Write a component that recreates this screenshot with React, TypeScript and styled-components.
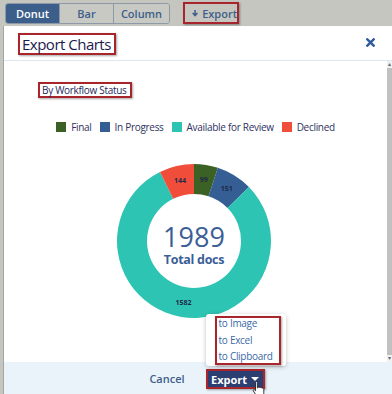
import React from 'react'
import styled, { createGlobalStyle } from 'styled-components'

interface Slice {
  label: string
  value: number
  color: string
}

const slices: Slice[] = [
  { label: 'Final', value: 99, color: '#3b6124' },
  { label: 'In Progress', value: 151, color: '#355e95' },
  { label: 'Available for Review', value: 1582, color: '#2ec4b3' },
  { label: 'Declined', value: 144, color: '#f04e3b' },
]

const GlobalStyle = createGlobalStyle`
  * { box-sizing: border-box; }
  body {
    margin: 0;
    background: #c6c6c0;
    font-family: "Open Sans", "Noto Sans", sans-serif;
  }
`

const CX = 80
const CY = 80
const R_OUT = 77
const R_IN = 47

const polar = (r: number, deg: number) => {
  const a = ((deg - 90) * Math.PI) / 180
  return [CX + r * Math.cos(a), CY + r * Math.sin(a)]
}

const arcPath = (start: number, end: number) => {
  const large = end - start > 180 ? 1 : 0
  const [x1, y1] = polar(R_OUT, start)
  const [x2, y2] = polar(R_OUT, end)
  const [x3, y3] = polar(R_IN, end)
  const [x4, y4] = polar(R_IN, start)
  return `M${x1} ${y1} A${R_OUT} ${R_OUT} 0 ${large} 1 ${x2} ${y2} L${x3} ${y3} A${R_IN} ${R_IN} 0 ${large} 0 ${x4} ${y4} Z`
}

const Donut: React.FC = () => {
  const total = slices.reduce((s, x) => s + x.value, 0)
  let angle = 0
  return (
    <ChartSvg width={160} height={160} viewBox="0 0 160 160">
      {slices.map(s => {
        const start = angle
        const end = angle + (s.value / total) * 360
        angle = end
        const [lx, ly] = polar(62, (start + end) / 2)
        return (
          <g key={s.label}>
            <path d={arcPath(start, end)} fill={s.color} />
            <SliceLabel x={lx} y={ly + 2.5} textAnchor="middle">
              {s.value}
            </SliceLabel>
          </g>
        )
      })}
      <BigNumber x={CX} y={CY + 6} textAnchor="middle">1989</BigNumber>
      <TotalText x={CX} y={CY + 23} textAnchor="middle">Total docs</TotalText>
    </ChartSvg>
  )
}

const legendOrder = ['Final', 'In Progress', 'Available for Review', 'Declined']

const App: React.FC = () => (
  <Page>
    <GlobalStyle />
    <TopBar>
      <Segmented>
        <SegButton $active $w={53}>Donut</SegButton>
        <SegButton $w={54}>Bar</SegButton>
        <SegButton $w={56}>Column</SegButton>
      </Segmented>
      <TopExport>
        <svg width="9" height="10" viewBox="0 0 9 10">
          <path d="M4.5 0.5v7M1 5l3.5 3.8L8 5" stroke="#3d5f8a" strokeWidth="2.2" fill="none" />
        </svg>
        Export
      </TopExport>
    </TopBar>
    <Modal>
      <Header>
        <Title>Export Charts</Title>
        <Close viewBox="0 0 10 10" width={9} height={9}>
          <path d="M1.5 1.5l7 7M8.5 1.5l-7 7" stroke="#2d5a9a" strokeWidth="2.6" strokeLinecap="square" />
        </Close>
      </Header>
      <Body>
        <Content>
          <Subtitle>By Workflow Status</Subtitle>
          <Legend>
            {legendOrder.map(name => {
              const s = slices.find(x => x.label === name)!
              return (
                <LegendItem key={name}>
                  <Swatch $color={s.color} />
                  {name}
                </LegendItem>
              )
            })}
          </Legend>
          <Donut />
        </Content>
        <Scrollbar>
          <Arrow>▴</Arrow>
          <Thumb />
          <Arrow>▾</Arrow>
        </Scrollbar>
      </Body>
      <Footer>
        <Cancel>Cancel</Cancel>
        <ExportWrap>
          <Menu>
            <MenuList>
              <MenuItem style={{ marginTop: -3 }}>to Image</MenuItem>
              <MenuItem>to Excel</MenuItem>
              <MenuItem>to Clipboard</MenuItem>
            </MenuList>
          </Menu>
          <ExportButton>
            Export
            <Caret />
          </ExportButton>
          <Hand width="14" height="17" viewBox="0 0 14 17">
            <path
              d="M4 1.2c.8 0 1.3.5 1.3 1.3v5.3l.6-.1c.4-.8 1.8-.8 2.1.1.5-.6 1.8-.5 2 .4.6-.4 1.8-.1 1.8.9v4.3c0 1.6-1.2 3.1-2.6 3.1H6.2c-.8 0-1.4-.4-1.9-1L1.4 11c-.5-.7.3-1.7 1.1-1.2l1 .9V2.5C3.5 1.7 3.3 1.2 4 1.2z"
              fill="#fff"
              stroke="#222"
              strokeWidth="0.9"
            />
          </Hand>
        </ExportWrap>
      </Footer>
    </Modal>
  </Page>
)

const Page = styled.div`
  width: 392px;
  height: 394px;
  display: flex;
  flex-direction: column;
  overflow: hidden;
`

const TopBar = styled.div`
  height: 26px;
  flex: none;
  display: flex;
  align-items: center;
  gap: 13px;
  padding: 0 5px;
`

const Segmented = styled.div`
  display: flex;
  height: 21px;
  border: 1px solid #8d99a6;
  border-radius: 3px;
  overflow: hidden;
`

const SegButton = styled.div<{ $active?: boolean; $w: number }>`
  width: ${p => p.$w}px;
  display: flex;
  align-items: center;
  justify-content: center;
  font-size: 11px;
  font-weight: 600;
  color: ${p => (p.$active ? '#fff' : '#3d5f8a')};
  background: ${p => (p.$active ? '#3b5e8a' : '#c9c9c4')};
  & + & {
    border-left: 1px solid #8d99a6;
  }
`

const RedBox = `
  border: 2px solid #a8252c;
  box-shadow: 1px 1px 2px rgba(0, 0, 0, 0.35);
`

const TopExport = styled.div`
  ${RedBox}
  height: 22px;
  width: 56px;
  display: flex;
  align-items: center;
  gap: 4px;
  padding-left: 7px;
  font-size: 11px;
  font-weight: 600;
  color: #3d5f8a;
`

const Modal = styled.div`
  flex: 1;
  margin-left: 3px;
  background: #fff;
  border-left: 1px solid #a5a5a5;
  display: flex;
  flex-direction: column;
  min-height: 0;
`

const Header = styled.div`
  height: 35px;
  flex: none;
  display: flex;
  align-items: center;
  justify-content: space-between;
  padding: 0 17px 0 14px;
  border-bottom: 1px solid #dbe7f2;
`

const Title = styled.div`
  ${RedBox}
  font-size: 15px;
  letter-spacing: -0.5px;
  line-height: 18px;
  color: #1c1b4e;
  padding: 0 3px 0 2px;
  margin-top: 1px;
`

const Close = styled.svg`
  margin-top: -2px;
`

const Body = styled.div`
  flex: 1;
  display: flex;
  min-height: 0;
`

const Content = styled.div`
  flex: 1;
  display: flex;
  flex-direction: column;
  align-items: center;
  padding-top: 21px;
`

const Subtitle = styled.div`
  ${RedBox}
  align-self: flex-start;
  margin-left: 34px;
  height: 16px;
  padding: 0 3px 0 2px;
  font-size: 10px;
  letter-spacing: -0.3px;
  line-height: 12px;
  color: #27285a;
`

const Legend = styled.div`
  display: flex;
  gap: 8px;
  margin-top: 22px;
  font-size: 10px;
  letter-spacing: -0.3px;
  color: #2f3160;
`

const LegendItem = styled.div`
  display: flex;
  align-items: center;
  gap: 5px;
`

const Swatch = styled.span<{ $color: string }>`
  width: 10px;
  height: 10px;
  background: ${p => p.$color};
`

const ChartSvg = styled.svg`
  margin-top: 27px;
  margin-left: -3px;
`

const SliceLabel = styled.text`
  font-size: 7px;
  font-weight: 700;
  fill: #1f2b4a;
`

const BigNumber = styled.text`
  font-size: 27px;
  font-weight: 400;
  fill: #3a5e97;
`

const TotalText = styled.text`
  font-size: 12.5px;
  font-weight: 700;
  letter-spacing: -0.3px;
  fill: #3a5e97;
`

const Scrollbar = styled.div`
  width: 5px;
  background: #f1f1f1;
  display: flex;
  flex-direction: column;
  align-items: center;
`

const Arrow = styled.span`
  font-size: 6px;
  line-height: 7px;
  color: #666;
`

const Thumb = styled.div`
  flex: 1;
  width: 5px;
  background: #c1c1c1;
`

const Footer = styled.div`
  height: 32px;
  flex: none;
  background: #ebf3fa;
  display: flex;
  align-items: center;
  justify-content: center;
  gap: 21px;
  padding-left: 18px;
`

const Cancel = styled.span`
  font-size: 11px;
  font-weight: 600;
  color: #3d5f8a;
`

const ExportWrap = styled.div`
  position: relative;
  margin-top: 2px;
`

const ExportButton = styled.div`
  ${RedBox}
  height: 20px;
  width: 59px;
  background: #2c3f72;
  color: #fff;
  font-size: 11px;
  font-weight: 700;
  display: flex;
  align-items: center;
  justify-content: center;
  gap: 4px;
`

const Caret = styled.span`
  width: 0;
  height: 0;
  border-left: 4px solid transparent;
  border-right: 4px solid transparent;
  border-top: 4px solid #fff;
`

const Hand = styled.svg`
  position: absolute;
  left: 46px;
  top: 11px;
`

const Menu = styled.div`
  position: absolute;
  left: 0;
  bottom: calc(100% + 3px);
  width: 80px;
  height: 52px;
  background: #fff;
  border-radius: 3px;
  box-shadow: 0 1px 4px rgba(0, 0, 0, 0.25);
  padding: 2px 0 0 9px;
`

const MenuList = styled.div`
  ${RedBox}
  width: 66px;
  height: 49px;
  overflow: hidden;
  padding-left: 2px;
`

const MenuItem = styled.div`
  font-size: 10px;
  letter-spacing: -0.3px;
  white-space: nowrap;
  line-height: 16.5px;
  color: #3b6aa6;
`

export default App
